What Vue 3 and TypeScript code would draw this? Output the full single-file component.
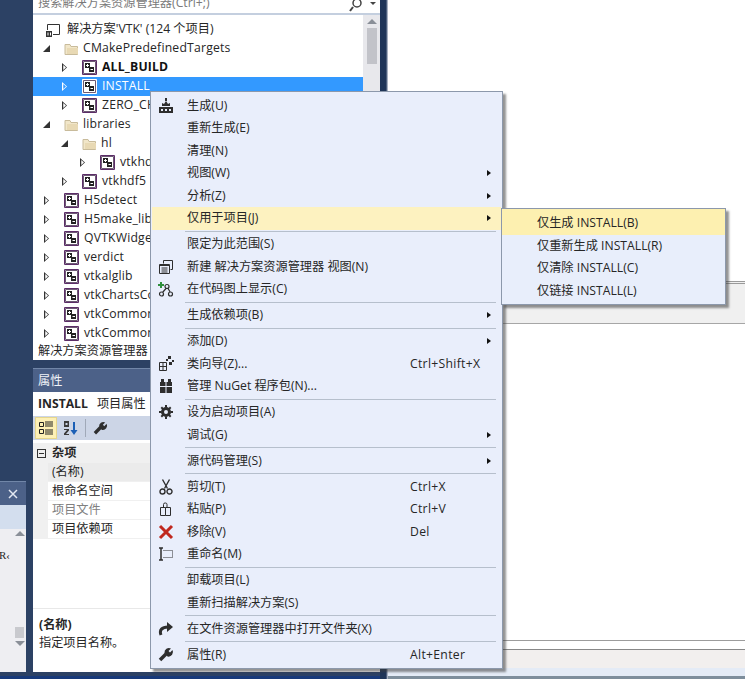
<script setup lang="ts">
interface Shape { d: string; fill?: string; stroke?: string; w?: number; dash?: string }
interface MenuRow { label: string; shortcut?: string; icon?: string; sub?: boolean; active?: boolean; sep?: boolean }
interface TreeRow { label: string; level: number; kind: 'project' | 'folder'; open?: boolean; bold?: boolean; selected?: boolean }

const dark = '#2e2e2e'
const icons: Record<string, Shape[]> = {
  build: [
    { d: 'M1 9h14v6H1z', fill: dark },
    { d: 'M3 11h2v2H3zM7 11h2v2H7zM11 11h2v2h-2z', fill: '#e9eefb' },
    { d: 'M4 8V5l2 1 2-3 2 3 2-1v3z', fill: dark },
    { d: 'M7 0h2v3H7z', fill: dark }
  ],
  newview: [
    { d: 'M5.5 4.5v-3h9v9h-2', stroke: dark, w: 1 },
    { d: 'M1.5 5.5h10v9h-10z', stroke: dark, w: 1 },
    { d: 'M2 5h9v2H2z', fill: dark },
    { d: 'M3.5 9h6M3.5 11h6M3.5 13h6', stroke: dark, w: 1 }
  ],
  codemap: [
    { d: 'M3 1v6M0 4h6', stroke: '#2f8f3c', w: 2 },
    { d: 'M7 5.5a2 2 0 1 1 4 0a2 2 0 1 1-4 0zM1.5 13a2 2 0 1 1 4 0a2 2 0 1 1-4 0zM10.5 13a2 2 0 1 1 4 0a2 2 0 1 1-4 0zM8 7.5l-3.5 4M10 7.5l2.5 4', stroke: dark, w: 1.2 }
  ],
  wizard: [
    { d: 'M1.5 6.500h7v8h-7zM5 7v7M2 10.500h6', stroke: dark, w: 1 },
    { d: 'M10 0h3v3h-3zM14 4h2v2h-2zM11 6h3v3h-3zM8 3h2v2H8z', fill: dark }
  ],
  nuget: [
    { d: 'M3 1h3v3H3zM10 1h3v3h-3z', fill: dark },
    { d: 'M2 4h12v11H2z', fill: dark },
    { d: 'M2 8h12v1H2zM7.5 4h1v11h-1z', fill: '#e9eefb' }
  ],
  gear: [
    { d: 'M8 4.5a3.5 3.5 0 1 1 0 7a3.5 3.5 0 1 1 0-7z', stroke: dark, w: 3 },
    { d: 'M7 1h2v2.5H7zM7 12.5h2V15H7zM1 7h2.5v2H1zM12.5 7H15v2h-2.5zM2.6 4l1.4-1.4 1.8 1.8-1.4 1.4zM13.4 4 12 2.6l-1.8 1.8 1.4 1.4zM2.6 12 4 13.4l1.8-1.8-1.4-1.4zM13.4 12 12 13.4l-1.8-1.8 1.4-1.4z', fill: dark }
  ],
  cut: [
    { d: 'M4.5 0.5 9.5 9.5M11.5 0.5 6.5 9.5', stroke: dark, w: 1.4 },
    { d: 'M2 12.5a2.5 2.5 0 1 1 5 0a2.5 2.5 0 1 1-5 0zM9 12.5a2.5 2.5 0 1 1 5 0a2.5 2.5 0 1 1-5 0z', stroke: dark, w: 1.4 }
  ],
  paste: [
    { d: 'M2.5 6.5h5v8h-5zM7.5 6.5h5v8h-5', stroke: dark, w: 1 },
    { d: 'M5.500 6.500v-3a1.500 1.500 0 0 1 1.500-1.500h.5a1.500 1.500 0 0 1 1.500 1.500v3', stroke: dark, w: 1 }
  ],
  remove: [
    { d: 'M2 2 14 14M14 2 2 14', stroke: '#c0281e', w: 3 }
  ],
  rename: [
    { d: 'M3 2v12M1 2h4M1 14h4', stroke: dark, w: 1.5 },
    { d: 'M5.500 4.500h9v7h-9', stroke: dark, w: 1, dash: '1 1' }
  ],
  open: [
    { d: 'M3 14C1 9 4 6 10 6', stroke: dark, w: 3 },
    { d: 'M9 1l6 5-6 5z', fill: dark }
  ],
  wrench: [
    { d: 'M2 13 8 7', stroke: dark, w: 3.6 },
    { d: 'M6.500 6A4.500 4.500 0 0 1 13 1.500L10.500 4l1.500 1.500L14.500 3A4.500 4.500 0 0 1 9.500 9.500z', fill: dark }
  ]
}

const menu: MenuRow[] = [
  { label: '生成(U)', icon: 'build' },
  { label: '重新生成(E)' },
  { label: '清理(N)' },
  { label: '视图(W)', sub: true },
  { label: '分析(Z)', sub: true },
  { label: '仅用于项目(J)', sub: true, active: true, sep: true },
  { label: '限定为此范围(S)' },
  { label: '新建 解决方案资源管理器 视图(N)', icon: 'newview' },
  { label: '在代码图上显示(C)', icon: 'codemap', sep: true },
  { label: '生成依赖项(B)', sub: true, sep: true },
  { label: '添加(D)', sub: true },
  { label: '类向导(Z)...', shortcut: 'Ctrl+Shift+X', icon: 'wizard' },
  { label: '管理 NuGet 程序包(N)...', icon: 'nuget', sep: true },
  { label: '设为启动项目(A)', icon: 'gear' },
  { label: '调试(G)', sub: true, sep: true },
  { label: '源代码管理(S)', sub: true, sep: true },
  { label: '剪切(T)', shortcut: 'Ctrl+X', icon: 'cut' },
  { label: '粘贴(P)', shortcut: 'Ctrl+V', icon: 'paste' },
  { label: '移除(V)', shortcut: 'Del', icon: 'remove' },
  { label: '重命名(M)', icon: 'rename', sep: true },
  { label: '卸载项目(L)' },
  { label: '重新扫描解决方案(S)', sep: true },
  { label: '在文件资源管理器中打开文件夹(X)', icon: 'open', sep: true },
  { label: '属性(R)', shortcut: 'Alt+Enter', icon: 'wrench' }
]

const submenu = ['仅生成 INSTALL(B)', '仅重新生成 INSTALL(R)', '仅清除 INSTALL(C)', '仅链接 INSTALL(L)']

const tree: TreeRow[] = [
  { label: 'CMakePredefinedTargets', level: 0, kind: 'folder', open: true },
  { label: 'ALL_BUILD', level: 1, kind: 'project', bold: true },
  { label: 'INSTALL', level: 1, kind: 'project', selected: true },
  { label: 'ZERO_CHECK', level: 1, kind: 'project' },
  { label: 'libraries', level: 0, kind: 'folder', open: true },
  { label: 'hl', level: 1, kind: 'folder', open: true },
  { label: 'vtkhdf5_hl', level: 2, kind: 'project' },
  { label: 'vtkhdf5', level: 1, kind: 'project' },
  { label: 'H5detect', level: 0, kind: 'project' },
  { label: 'H5make_libsettings', level: 0, kind: 'project' },
  { label: 'QVTKWidgetPlugin', level: 0, kind: 'project' },
  { label: 'verdict', level: 0, kind: 'project' },
  { label: 'vtkalglib', level: 0, kind: 'project' },
  { label: 'vtkChartsCore', level: 0, kind: 'project' },
  { label: 'vtkCommonColor', level: 0, kind: 'project' },
  { label: 'vtkCommonComputationalGeometry', level: 0, kind: 'project' }
]

const props = [
  { label: '(名称)', cls: 'named' },
  { label: '根命名空间', cls: '' },
  { label: '项目文件', cls: 'muted' },
  { label: '项目依赖项', cls: '' }
]
</script>

<template>
  <div class="desk">
    <div class="rail">
      <div class="mini">
        <div class="mini-title">
          <svg width="10" height="10" viewBox="0 0 10 10"><path d="M1 1 9 9M9 1 1 9" stroke="#e4e9f2" stroke-width="1.500" /></svg>
        </div>
        <div class="mini-head"></div>
        <div class="mini-body">
          <span class="mini-text">R‹</span>
          <div class="mini-scroll">
            <i class="up"></i>
            <b class="mini-thumb"></b>
            <i class="down"></i>
          </div>
        </div>
      </div>
    </div>

    <div class="side">
      <section class="explorer">
        <div class="search">
          <span class="search-text">搜索解决方案资源管理器(Ctrl+;)</span>
          <svg class="lens" width="14" height="12" viewBox="0 0 14 12"><path d="M4 7 1 11" stroke="#444" stroke-width="2" /><path d="M8 -1a4 4 0 1 1 0 8a4 4 0 1 1 0-8z" fill="none" stroke="#444" stroke-width="1.500" /></svg>
          <i class="drop"></i>
        </div>
        <div class="tree-wrap">
          <div class="tree">
            <div class="row root">
              <svg class="ic" width="15" height="14" viewBox="0 0 15 14"><path d="M1.500 7V1.500h12v10H7" fill="none" stroke="#333" /><path d="M0 8h6v6H0z" fill="#333" /><path d="M1.500 9.500h1v3h-1zM4 9.500h1v3H4z" fill="#fff" /></svg>
              <span>解决方案'VTK' (124 个项目)</span>
            </div>
            <div v-for="r in tree" :key="r.label" class="row" :class="{ sel: r.selected, bold: r.bold }">
              <span class="indent" :class="'lv' + r.level"></span>
              <span class="tri" :class="{ opened: r.open }"></span>
              <svg v-if="r.kind === 'folder'" class="ic" width="14" height="13" viewBox="0 0 14 13">
                <path d="M1 2.500h5l1 2h6.500v8H1z" fill="#f1e6c9" stroke="#c8bb9b" />
                <path d="M3 6h11v6H3z" fill="#e8d9b4" />
              </svg>
              <svg v-else class="ic" width="15" height="15" viewBox="0 0 15 15">
                <path d="M.5.500h14v14H.5z" fill="#fff" :stroke="r.selected ? '#fff' : '#5c2d68'" />
                <path d="M1.500 1.500h12v12h-12z" fill="none" stroke="#6d5a74" />
                <path d="M3 3h5v5H3zM7 7h5v5H7z" fill="#222" />
                <path d="M4 5.500h3M5.500 4v3M8.500 9.500h2.500" stroke="#fff" />
              </svg>
              <span class="label">{{ r.label }}</span>
            </div>
          </div>
          <div class="scroll">
            <i class="up"></i>
            <b class="thumb"></b>
          </div>
        </div>
        <div class="tab">解决方案资源管理器</div>
      </section>

      <section class="props">
        <div class="props-title">属性</div>
        <div class="props-sub"><b>INSTALL</b><span class="props-name">项目属性</span></div>
        <div class="tools">
          <span class="tool on">
            <svg width="16" height="16" viewBox="0 0 16 16"><path d="M1.500 2.500h4v4h-4zM1.500 9.500h4v4h-4z" fill="none" stroke="#222" /><path d="M7 2h8M7 4h8M7 6h8M7 10h8M7 12h8M7 14h8" stroke="#222" /></svg>
          </span>
          <span class="tool">
            <svg width="16" height="16" viewBox="0 0 16 16"><path d="M1 1h5v6H1zM1 9h5v1.500L3 14h3v1H1v-1.500L4 10H1z" fill="#3a3a3a" /><path d="M2.500 3h2v2h-2z" fill="#ccd5e6" /><path d="M11 2v11" stroke="#1b5fb5" stroke-width="2" /><path d="M7.500 10h7L11 15z" fill="#1b5fb5" /></svg>
          </span>
          <i class="tool-sep"></i>
          <span class="tool">
            <svg width="15" height="15" viewBox="0 0 16 16"><path v-for="(s, i) in icons.wrench" :key="i" :d="s.d" :fill="s.fill || 'none'" :stroke="s.stroke || 'none'" :stroke-width="s.w" /></svg>
          </span>
        </div>
        <div class="grid">
          <div class="cat"><span class="minus"></span><b>杂项</b></div>
          <div v-for="p in props" :key="p.label" class="prop" :class="p.cls"><span>{{ p.label }}</span></div>
        </div>
        <div class="desc">
          <b>(名称)</b>
          <span>指定项目名称。</span>
        </div>
      </section>
    </div>

    <div class="divider"></div>

    <main class="editor">
      <div class="pane top"></div>
      <div class="bar"></div>
      <div class="pane mid"></div>
      <div class="foot"></div>
      <div class="status"></div>
    </main>

    <div class="menu">
      <template v-for="m in menu" :key="m.label">
        <div class="item" :class="{ active: m.active }">
          <span class="glyph">
            <svg v-if="m.icon" width="16" height="16" viewBox="0 0 16 16">
              <path v-for="(s, i) in icons[m.icon]" :key="i" :d="s.d" :fill="s.fill || 'none'" :stroke="s.stroke || 'none'" :stroke-width="s.w" :stroke-dasharray="s.dash" />
            </svg>
          </span>
          <span>{{ m.label }}</span>
          <span class="key">{{ m.shortcut }}</span>
          <i v-if="m.sub" class="arrow"></i>
        </div>
        <div v-if="m.sep" class="sep"></div>
      </template>

      <div class="submenu">
        <div v-for="(s, i) in submenu" :key="s" class="sub-item" :class="{ active: i === 0 }">{{ s }}</div>
      </div>
    </div>
  </div>
</template>

<style scoped>
* { box-sizing: border-box; }
.desk {
  position: relative;
  display: flex;
  width: 745px;
  height: 679px;
  overflow: hidden;
  background: linear-gradient(180deg, #2c4164 676px, #17397a 676px);
  font: 12.2px/1 "Open Sans", "Noto Sans CJK SC", sans-serif;
  color: #262626;
}
.rail { width: 33px; flex: none; padding-top: 481px; }
.mini { width: 26px; height: 191px; display: flex; flex-direction: column; border-top: 1px solid #7186a8; background: #eeeef2; }
.mini-title { height: 23px; background: #4c6188; display: flex; align-items: center; justify-content: flex-end; padding-right: 8px; }
.mini-head { height: 24px; background: #d3deee; }
.mini-body { flex: 1; display: flex; justify-content: space-between; position: relative; }
.mini-text { margin-top: 21px; font: 11px/1 "Liberation Serif", serif; margin-left: -1px; }
.mini-scroll { width: 13px; display: flex; flex-direction: column; align-items: center; padding-top: 2px; }
.mini-thumb { width: 9px; height: 11px; background: #c8c9ce; margin-top: 91px; }
.mini-scroll .down { margin-top: 3px; }
.up, .down { display: block; width: 0; height: 0; border-left: 5px solid transparent; border-right: 5px solid transparent; }
.up { border-bottom: 5px solid #8a8f98; }
.down { border-top: 5px solid #8a8f98; }

.side { width: 347px; flex: none; display: flex; flex-direction: column; gap: 8px; }
.explorer { height: 360px; background: #fff; display: flex; flex-direction: column; }
.search {
  height: 15px;
  flex: none;
  background: #fff;
  border-bottom: 2px solid #c4cfdf;
  display: flex;
  align-items: flex-end;
  overflow: hidden;
  padding: 0 0 1px 5px;
  position: relative;
  color: #7a7a7a;
}
.search-text { flex: 1; line-height: 18px; white-space: nowrap; }
.lens { margin-right: 7px; }
.drop { width: 0; height: 0; border-left: 3px solid transparent; border-right: 3px solid transparent; border-top: 3px solid #444; margin: 0 4px 7px 0; }
.tree-wrap { height: 326px; flex: none; display: flex; padding-top: 5px; overflow: hidden; }
.tree { width: 330px; flex: none; overflow: hidden; }
.row { height: 19px; display: flex; align-items: center; white-space: nowrap; padding-left: 9px; }
.root { padding-left: 13px; }
.root .ic { margin-right: 6px; }
.indent { flex: none; }
.lv0 { width: 0; }
.lv1 { width: 18px; }
.lv2 { width: 36px; }
.tri { width: 22px; height: 9px; flex: none; position: relative; }
.tri::before {
  content: "";
  position: absolute;
  left: 2px;
  top: 0;
  width: 5px;
  height: 9px;
  background: #333;
  clip-path: polygon(0 0, 100% 50%, 0 100%, 0 0, 25% 22%, 25% 78%, 80% 50%, 25% 22%);
}
.tri.opened::before {
  left: 1px;
  width: 7px;
  height: 7px;
  top: 1px;
  clip-path: polygon(100% 0, 100% 100%, 0 100%);
}
.ic { flex: none; }
.label { margin-left: 5px; letter-spacing: .2px; }
.bold { font-weight: 700; color: #111; }
.sel { background: #3399ff; color: #fff; }
.sel .tri::before { background: #fff; }
.scroll { flex: 1; width: 16px; background: #e8e8ec; display: flex; flex-direction: column; align-items: center; padding-top: 4px; margin-top: -5px; }
.thumb { width: 10px; height: 36px; background: #c2c3c9; margin-top: 4px; }
.tab { flex: 1; padding: 3px 0 0 5px; line-height: 14px; }

.props { height: 304px; background: #fff; display: flex; flex-direction: column; }
.props-title { height: 24px; background: #4c6188; color: #f0f3f8; padding-left: 5px; line-height: 24px; border-top: 1px solid #7186a8; }
.props-sub { height: 24px; line-height: 23px; padding-left: 5px; }
.props-name { margin-left: 9px; }
.tools { height: 24px; background: #ccd5e6; display: flex; align-items: center; gap: 3px; padding-left: 2px; }
.tool { width: 22px; height: 22px; display: flex; align-items: center; justify-content: center; }
.tool.on { background: #fdf0b5; border: 1px solid #e6d68c; }
.tool-sep { width: 1px; height: 18px; background: #a0a9b8; }
.grid { flex: 1; padding-top: 3px; }
.cat { height: 20px; background: #f0f0f0; display: flex; align-items: center; gap: 6px; padding-left: 4px; }
.minus { width: 9px; height: 9px; border: 1px solid #333; position: relative; }
.minus::after { content: ""; position: absolute; left: 1px; right: 1px; top: 3px; height: 1px; background: #333; }
.prop { height: 19px; padding-left: 15px; background: #f0f0f0; }
.prop span { display: block; height: 19px; line-height: 18px; background: #fff; padding-left: 4px; border-bottom: 1px solid #f0f0f0; }
.prop.named span { background: #ebebeb; }
.prop.muted span { color: #808080; }
.desc { height: 64px; border-top: 1px solid #e8e8e8; padding: 9px 0 0 6px; display: flex; flex-direction: column; gap: 4px; line-height: 14px; }

.divider { width: 8px; flex: none; background: linear-gradient(90deg, #1f3558 75%, #d5dae4 100%); }
.editor { flex: 1; display: flex; flex-direction: column; background: #fff; }
.pane { background: #fff; }
.top { height: 281px; }
.bar { height: 43px; background: #f0f0f0; border-top: 3px double #9a9a9a; border-bottom: 1px solid #a6a6a6; }
.mid { height: 316px; }
.foot { height: 28px; background: #f2efee; border-top: 1px solid #9c9c9c; box-shadow: inset 0 8px 0 #fff, inset 0 9px 0 #888; }
.status { flex: 1; background: #e4ebf6; border-bottom: 3px solid #7e8e9c; }

.menu {
  position: absolute;
  left: 150px;
  top: 91px;
  width: 353px;
  height: 578px;
  padding: 2.500px 1px 2px;
  background: #e9eefb;
  border: 1px solid #8c98ab;
  box-shadow: 3px 3px 2px rgba(60, 60, 60, .55);
}
.item {
  height: 22.5px;
  display: grid;
  grid-template-columns: 35px 223px 1fr;
  align-items: center;
  position: relative;
  white-space: nowrap;
}
.key { letter-spacing: .3px; }
.glyph { display: flex; align-items: center; padding-left: 6px; }
.item.active { background: #fdf2c0; }
.arrow {
  position: absolute;
  left: 335px;
  top: 8px;
  width: 0;
  height: 0;
  border-top: 3.500px solid transparent;
  border-bottom: 3.500px solid transparent;
  border-left: 4px solid #111;
}
.sep { height: 3.500px; padding-top: 1px; margin: 0 5px 0 33px; }
.sep::before { content: ""; display: block; height: 1px; background: #b6bfcc; }
.submenu {
  position: absolute;
  left: 350px;
  top: 116px;
  width: 225px;
  height: 97px;
  background: #e8eefb;
  border: 1px solid #8c98ab;
  box-shadow: 3px 3px 2px rgba(60, 60, 60, .55);
}
.sub-item { line-height: 22.700px; padding-left: 35px; white-space: nowrap; }
.sub-item.active { background: #fdf0b0; padding-top: 3px; }
</style>
